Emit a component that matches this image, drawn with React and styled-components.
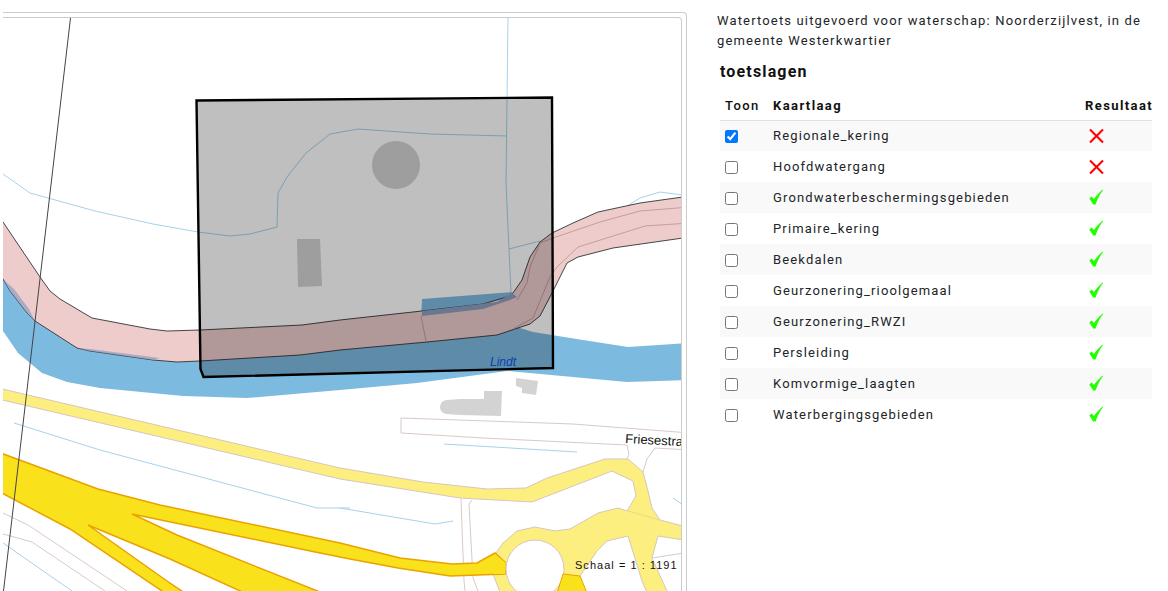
import React from 'react';
import styled, { createGlobalStyle } from 'styled-components';

const Global = createGlobalStyle`
  html, body { margin: 0; padding: 0; background: #fff; height: 100%; overflow: hidden; }
  body { font-family: Roboto, "Liberation Sans", sans-serif; color: #212529; }
`;
const Page = styled.div`
  display: flex; align-items: flex-start; width: 1168px; height: 591px; overflow: hidden; background: #fff;
`;
const MapColumn = styled.div`
  flex: none; width: 687px; height: 591px; padding: 12px 0 0 3px; box-sizing: border-box; overflow: hidden;
`;
const MapCard = styled.div`
  width: 684px; height: 600px; box-sizing: border-box; border: 1px solid #ccc; border-left: 0; border-radius: 0 4px 0 0; padding: 4px 4px 0 0;
`;
const MapFrame = styled.div`
  position: relative; width: 679px; height: 590px; box-sizing: border-box; border: 1px solid #ccc; border-left: 0; border-radius: 0 4px 0 0; overflow: hidden;
`;
const MapSvg = styled.svg`
  display: block; width: 678px; height: 589px;
`;
const Scale = styled.div`
  position: absolute; left: 572px; top: 540px; font-family: "Liberation Sans", Arial, sans-serif; font-size: 11px; letter-spacing: 1.03px; line-height: 14px; color: #111; white-space: nowrap;
`;
const Side = styled.div`
  flex: none; width: 436px; margin-left: 30px; padding-top: 11px; letter-spacing: 1.15px; overflow: visible;
`;
const Intro = styled.p`
  margin: 0; font-size: 13px; line-height: 20px; width: 436px; color: #212529;
`;
const Title = styled.h3`
  margin: 11px 0 0 3px; font-size: 16px; line-height: 20px; font-weight: 700; color: #111; letter-spacing: 1.15px;
`;
const Table = styled.table`
  margin: 8px 0 0 3px; width: 432px; border-collapse: collapse; table-layout: fixed; font-size: 13px;
`;
const HeadCell = styled.th`
  box-sizing: border-box; height: 30px; padding: 2px 0 0 ${p => p.$pad}px; text-align: left; vertical-align: middle; font-weight: ${p => p.$light ? 500 : 700}; line-height: 20px; letter-spacing: 1.4px; width: ${p => p.$w}px; white-space: nowrap; border-bottom: 1px solid #dee2e6; color: #111;
`;
const Row = styled.tr`
  height: 31px; background: ${p => p.$odd ? '#f9f9f9' : '#fff'};
  & + & td { border-top: 1px solid #dee2e6; }
`;
const Cell = styled.td`
  padding: 0 0 0 ${p => p.$pad}px; vertical-align: middle; line-height: 20px; color: #212529; white-space: nowrap;
`;
const Check = styled.input`
  display: block; margin: 1px 0 0; width: 13px; height: 13px;
`;
const ResultIcon = styled.svg`
  display: block; width: 15px; height: 17px;
`;

const rows = [
  ['Regionale_kering', false], ['Hoofdwatergang', false], ['Grondwaterbeschermingsgebieden', true],
  ['Primaire_kering', true], ['Beekdalen', true], ['Geurzonering_rioolgemaal', true],
  ['Geurzonering_RWZI', true], ['Persleiding', true], ['Komvormige_laagten', true], ['Waterbergingsgebieden', true],
];

const Pass = () => (
  <ResultIcon viewBox="0 0 15 17"><path d="M0.3 9.4 L2.6 7.6 L5 10 C7.2 6.6 10 3.4 13.8 0.4 L14.2 1 C11 5 8.6 9.6 6.6 15.6 L4.2 15.6 Z" fill="#22ff00" /></ResultIcon>
);
const Fail = () => (
  <ResultIcon viewBox="0 0 15 17"><path d="M1 2.5 L14 15.5 M14 2.5 L1 15.5" stroke="#ff0000" strokeWidth="2.1" fill="none" /></ResultIcon>
);

const hair = { fill: 'none', vectorEffect: 'non-scaling-stroke' };

function MapArt() {
  return (
    <MapSvg viewBox="3 18 678 589">
      {/* river */}
      <path fill="#7dbae0" d="M0 275 L0 327 L3 331 L18 353 L42 373 L67 382 L100 388 L183 396 L247 398 L340 390 L417 383 L507 371 L627 382 L690 380 L690 343 L628 347 L583 340 L533 332 L510 325 L517 297 L512 292 L422 299 L421 320 L200 345 L100 340 L40 310 Z" />
      {/* thin water lines */}
      <g {...hair} stroke="#a6d2ec" strokeWidth="1">
        <path d="M3 174 L30 193 L95 211 L153 224 L198 232 L230 236 L250 234 L277 227 L278 193 L287 177 L306 153 L330 134 L358 129 L430 134 L507 136" />
        <path d="M508 17 L507 100 L506 183 L509 249 L511 293 M509 249 L540 241 M602 222 L640 198 L660 192 L690 196" />
        <path d="M14 423 L100 450 L317 508 L350 508 M444 444 L577 452 M340 508 L435 524 L453 521 M673 498 L690 510 M3 543 L72 591" />
      </g>
      {/* pink band */}
      <path fill="#eecccc" stroke="#333" strokeWidth=".9" d="M0 218 L3 222 L40 277 L50 291 L60 299 L92 318 L150 329 L167 331 L200 330 L302 325 L340 320 L422 311 L483 304 L510 296 L513 293 L522 280 L530 257 L540 242 L552 233 L573 223 L598 212 L640 203 L690 196 L690 237 L613 248 L578 257 L567 263 L560 277 L552 293 L540 316 L530 324 L497 335 L427 342 L340 350 L300 355 L200 361 L177 362 L153 360 L90 351 L77 348 L35 321 L27 313 L10 291 L3 279 L0 275 Z" />
      <path fill="#8d9dc0" d="M3 279 L10 291 L27 313 L35 321 L29 309 L14 289 Z M77 348 L90 351 L153 360 L160 358 L90 349 Z" opacity=".7" />
      <path fill="#8d9fc0" d="M422 316 L483 309 L510 300 L517 297 L512 293 L497 302 L422 311 Z" />
      <g {...hair} stroke="#c79c9c" strokeWidth="1">
        <path d="M690 207 L640 211 L600 222 L553 238 L540 243 L530 267 L527 283 L517 300" />
        <path d="M690 223 L645 226 L578 247 L557 267 L550 277 L540 301 L533 318 L513 329" />
        <path d="M421 316 L426 341" />
      </g>
      {/* secondary roads outlines */}
      <g {...hair} stroke="#d9c9c6" strokeWidth="1">
        <path d="M401 433 L401 418 L573 424 L690 433 M401 433 L483 438 L627 445 L629 454 L627 459 M655 448 L690 450 M655 448 L647 459 L643 472" />
        <path d="M461 499 L464 581 L465 591 M472 500 L469 504 L473 578 L478 591" />
        <path d="M3 513 L28 525 L127 591 M3 534 L32 542 L105 591 M652 558 L690 552" />
      </g>
      {/* buildings */}
      <path fill="#d3d3d3" d="M484 391 L502 391 L501 416 L460 415 L447 414 A7 7 0 0 1 447 400 L460 399 L484 399 Z" />
      <path fill="#d3d3d3" d="M516 378 L538 381 L536 395 L522 393 L522 388 L516 386 Z" />
      {/* light roads */}
      <path fill="#fdee80" stroke="#d6c7bd" strokeWidth="1" d="M-2 388 L340 468 L423 482 L487 489 L526 488 L547 478 L605 459 L628 459 L643 472 L648 491 L652 508 L660 520 L690 528 L690 541 L658 536 L652 558 L667 591 L670 600 L650 600 L642 581 L628 536 L607 541 L597 551 L580 576 L587 600 L503 600 L493 574 L496 553 L503 543 L517 531 L535 527 L555 531 L570 529 L598 513 L618 508 L627 511 L636 496 L633 481 L612 471 L532 502 L460 498 L340 479 L-2 399 Z" />
      <path {...hair} stroke="#e8d98a" strokeWidth="1" d="M628 511 L660 520" />
      {/* motorway */}
      <path fill="#f9e11b" stroke="#e9a200" strokeWidth="1.5" d="M-2 452 L98 489 L160 505 L340 543 L400 558 L452 564 L477 563 L495 553 L506 563 L505 574 L450 576 L398 568 L350 559 L320 553 L132 514 L177 535 L340 600 L260 600 L170 559 L88 525 L167 581 L195 600 L170 600 L162 591 L70 529 L-2 491 Z" />
      <path fill="#f9e11b" d="M495 554 L506 563 L505 574 L493 574 Z" />
      {/* roundabout */}
      <circle cx="535" cy="569" r="29" fill="#fff" stroke="#d6c7bd" strokeWidth="1" />
      <path fill="#f9e11b" stroke="#e9a200" strokeWidth="1" d="M563 574 L580 576 L590 600 L555 600 Z" />
      {/* site overlay */}
      <path fill="#000" fillOpacity=".25" stroke="#000" strokeWidth="2.4" strokeLinejoin="miter" d="M196.500 100.500 L552 97.500 L553 368 L203.500 377 L200.500 369 Z" />
      <circle cx="396" cy="165" r="24" fill="#9e9e9e" />
      <path fill="#9e9e9e" d="M297 239 L320 239 L322 286 L298 287 Z" />
      {/* thin black line */}
      <path d="M70.500 18 L3.500 591" stroke="#444" strokeWidth="1" fill="none" />
      <text x="490" y="365.500" fontFamily="Liberation Sans, Arial, sans-serif" fontSize="12" fontStyle="italic" fill="#0b3fb4">Lindt</text>
      <text x="625" y="443" transform="rotate(3 625 443)" fontFamily="Liberation Sans, Arial, sans-serif" fontSize="13" fill="#111">Friesestra</text>
    </MapSvg>
  );
}

export default function App() {
  return (
    <Page>
      <Global />
      <MapColumn>
        <MapCard>
          <MapFrame>
            <MapArt />
            <Scale>Schaal = 1 : 1191</Scale>
          </MapFrame>
        </MapCard>
      </MapColumn>
      <Side>
        <Intro>Watertoets uitgevoerd voor waterschap: Noorderzijlvest, in de gemeente Westerkwartier</Intro>
        <Title>toetslagen</Title>
        <Table>
          <thead>
            <tr>
              <HeadCell $w={48} $pad={5} $light>Toon</HeadCell>
              <HeadCell $w={312} $pad={5}>Kaartlaag</HeadCell>
              <HeadCell $w={72} $pad={5}>Resultaat</HeadCell>
            </tr>
          </thead>
          <tbody>
            {rows.map(([name, ok], i) => (
              <Row key={name} $odd={i % 2 === 0}>
                <Cell $pad={5}><Check type="checkbox" defaultChecked={i === 0} /></Cell>
                <Cell $pad={5}>{name}</Cell>
                <Cell $pad={9}>{ok ? <Pass /> : <Fail />}</Cell>
              </Row>
            ))}
          </tbody>
        </Table>
      </Side>
    </Page>
  );
}
